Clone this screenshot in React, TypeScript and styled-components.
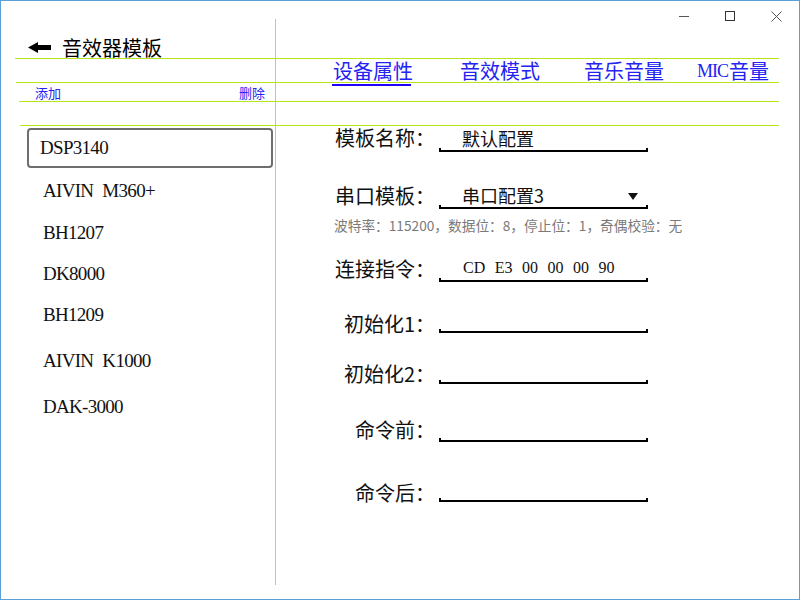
import React from "react";
import styled, { createGlobalStyle } from "styled-components";

const LINE = "#b5e61d";
const BLUE = "#2323f2";

const GlobalStyle = createGlobalStyle`
  html, body {
    margin: 0;
    padding: 0;
    width: 800px;
    height: 600px;
    overflow: hidden;
    background: #fff;
  }
  body {
    font-family: "Noto Sans CJK SC", "Noto Sans", sans-serif;
    color: #111;
  }
`;

const DEVICES = [
  { name: "DSP3140", gap: 2, active: true },
  { name: "AIVIN M360+", gap: 3 },
  { name: "BH1207", gap: 2 },
  { name: "DK8000", gap: 1 },
  { name: "BH1209", gap: 1 },
  { name: "AIVIN K1000", gap: 6 },
  { name: "DAK-3000", gap: 6 },
];

const TABS = [
  { han: "设备属性" },
  { han: "音效模式" },
  { han: "音乐音量" },
  { latin: "MIC", han: "音量" },
];

const FIELDS = [
  { label: "模板名称：", value: "默认配置", gap: 2, lift: 6 },
  {
    label: "串口模板：",
    value: "串口配置3",
    gap: 33,
    lift: 5,
    select: true,
    hint: "波特率：115200，数据位：8，停止位：1，奇偶校验：无",
  },
  { label: "连接指令：", value: "CD E3 00 00 00 90", gap: 24, lift: 5, mono: true },
  { label: "初始化1：", value: "", gap: 27, lift: 1 },
  { label: "初始化2：", value: "", gap: 27, lift: 2 },
  { label: "命令前：", value: "", gap: 34, lift: 4 },
  { label: "命令后：", value: "", gap: 36, lift: 1 },
];

const App: React.FC = () => {
  return (
    <>
      <GlobalStyle />
      <StyledWindow>
        <StyledControls>
          <svg width="10" height="10" viewBox="0 0 10 10">
            <path d="M0 5.5 H10" stroke="#555" strokeWidth="1" />
          </svg>
          <svg width="10" height="10" viewBox="0 0 10 10">
            <rect x="0.5" y="0.5" width="9" height="9" fill="none" stroke="#333" strokeWidth="1" />
          </svg>
          <svg width="11" height="11" viewBox="0 0 11 11">
            <path d="M0.5 0.5 L10.5 10.5 M10.5 0.5 L0.5 10.5" stroke="#555" strokeWidth="1" />
          </svg>
        </StyledControls>

        <StyledBody>
          <StyledHeader>
            <svg width="23" height="11" viewBox="0 0 23 11">
              <path d="M0 5.5 L10 0 L10 3 L23 3 L23 8 L10 8 L10 11 Z" fill="#000" />
            </svg>
            <span>音效器模板</span>
          </StyledHeader>
          <StyledDivider />

          <StyledRule $row={2} $inset={14} />
          <StyledTabs>
            {TABS.map((el, idx) => (
              <StyledTab key={idx.toString()} $active={idx === 0}>
                {el.latin && <StyledLatin>{el.latin}</StyledLatin>}
                {el.han}
              </StyledTab>
            ))}
          </StyledTabs>
          <StyledRule $row={4} $inset={15} />
          <StyledActions>
            <span>添加</span>
            <span>删除</span>
          </StyledActions>
          <StyledRule $row={6} $inset={18} />
          <StyledRule $row={8} $inset={19} />

          <StyledList>
            {DEVICES.map((el, idx) => (
              <StyledItem key={idx.toString()} $active={!!el.active} $gap={el.gap}>
                {el.name}
              </StyledItem>
            ))}
          </StyledList>

          <StyledForm>
            {FIELDS.map((el, idx) => (
              <React.Fragment key={idx.toString()}>
                <StyledRow $gap={el.gap}>
                  <StyledLabel $lift={el.lift}>{el.label}</StyledLabel>
                  <StyledField>
                    <StyledValue $mono={!!el.mono}>
                      <span>{el.value}</span>
                      {el.select && <StyledCaret />}
                    </StyledValue>
                    <StyledUnderline />
                  </StyledField>
                </StyledRow>
                {el.hint && <StyledHint>{el.hint}</StyledHint>}
              </React.Fragment>
            ))}
          </StyledForm>
        </StyledBody>
      </StyledWindow>
    </>
  );
};

const StyledWindow = styled.div`
  position: relative;
  width: 800px;
  height: 600px;
  box-sizing: border-box;
  border: 1px solid #5a9fd8;
  background: #fff;
`;

const StyledControls = styled.div`
  position: absolute;
  top: 10px;
  right: 17px;
  display: flex;
  align-items: flex-start;
  gap: 36px;
  svg {
    display: block;
  }
`;

const StyledBody = styled.div`
  margin-top: 18px;
  height: 566px;
  display: grid;
  grid-template-columns: 274px 1px 1fr;
  grid-template-rows: 39px 1px 23px 1px 18px 1px 23px 1px 1fr;
`;

const StyledHeader = styled.div`
  grid-row: 1;
  grid-column: 1;
  display: flex;
  align-items: center;
  gap: 11px;
  padding: 18px 0 0 27px;
  font-size: 20px;
  line-height: 20px;
  color: #000;
  svg {
    display: block;
  }
`;

const StyledDivider = styled.div`
  grid-row: 1 / -1;
  grid-column: 2;
  background: ${LINE};
  z-index: 1;
`;

const StyledRule = styled.div<{ $row: number; $inset: number }>`
  grid-row: ${(p) => p.$row};
  grid-column: 1 / -1;
  margin: 0 20px 0 ${(p) => p.$inset}px;
  background: ${LINE};
`;

const StyledTabs = styled.div`
  grid-row: 3;
  grid-column: 3;
  display: grid;
  grid-template-columns: 127px 124px 113px auto;
  padding-left: 57px;
`;

const StyledTab = styled.div<{ $active: boolean }>`
  position: relative;
  display: flex;
  align-items: center;
  font-size: 20px;
  line-height: 20px;
  color: ${BLUE};
  white-space: nowrap;
  &::after {
    content: "";
    display: ${(p) => (p.$active ? "block" : "none")};
    position: absolute;
    left: -1px;
    width: 79px;
    top: calc(100% + 2px);
    height: 2px;
    background: #2200ff;
  }
`;

const StyledLatin = styled.span`
  font-family: "Liberation Serif", serif;
  font-size: 18px;
  letter-spacing: -1px;
  margin-right: 1px;
`;

const StyledActions = styled.div`
  grid-row: 5;
  grid-column: 1;
  display: flex;
  align-items: center;
  justify-content: space-between;
  padding: 1px 10px 0 34px;
  font-size: 13px;
  line-height: 16px;
  color: ${BLUE};
`;

const StyledList = styled.div`
  grid-row: 9;
  grid-column: 1;
  display: flex;
  flex-direction: column;
  padding-left: 26px;
`;

const StyledItem = styled.div<{ $active: boolean; $gap: number }>`
  width: 246px;
  height: 40px;
  box-sizing: border-box;
  margin-top: ${(p) => p.$gap}px;
  padding-left: ${(p) => (p.$active ? 11 : 14)}px;
  border: 2px solid ${(p) => (p.$active ? "#6e6e6e" : "transparent")};
  border-radius: 4px;
  font-family: "Liberation Serif", serif;
  font-size: 19px;
  letter-spacing: -0.7px;
  word-spacing: 5px;
  line-height: 35px;
  color: #111;
`;

const StyledForm = styled.div`
  grid-row: 9;
  grid-column: 3;
  display: flex;
  flex-direction: column;
`;

const StyledRow = styled.div<{ $gap: number }>`
  display: flex;
  align-items: flex-end;
  margin-top: ${(p) => p.$gap}px;
`;

const StyledLabel = styled.div<{ $lift: number }>`
  width: 159px;
  text-align: right;
  font-size: 20px;
  line-height: 16px;
  padding-bottom: ${(p) => p.$lift}px;
  color: #111;
  white-space: nowrap;
`;

const StyledField = styled.div`
  width: 209px;
  margin-left: 4px;
  display: flex;
  flex-direction: column;
`;

const StyledValue = styled.div<{ $mono: boolean }>`
  height: 20px;
  display: flex;
  align-items: center;
  justify-content: space-between;
  padding: 0 10px 0 ${(p) => (p.$mono ? 24 : 23)}px;
  font-family: ${(p) => (p.$mono ? '"Liberation Serif", serif' : '"Noto Sans CJK SC", sans-serif')};
  font-size: ${(p) => (p.$mono ? 16 : 18)}px;
  word-spacing: ${(p) => (p.$mono ? 5.5 : 0)}px;
  line-height: 20px;
  color: #111;
  white-space: nowrap;
`;

const StyledCaret = styled.span`
  width: 0;
  height: 0;
  border-left: 5.5px solid transparent;
  border-right: 5.5px solid transparent;
  border-top: 7px solid #111;
  margin-top: 2px;
`;

const StyledUnderline = styled.div`
  height: 2px;
  border: 2px solid #000;
  border-top: none;
`;

const StyledHint = styled.div`
  margin: 7px 0 0 58px;
  font-size: 13.7px;
  line-height: 18px;
  color: #7a7a7a;
  white-space: nowrap;
`;

export default App;
